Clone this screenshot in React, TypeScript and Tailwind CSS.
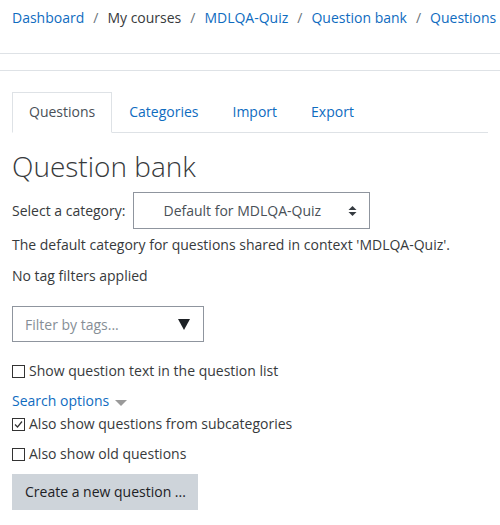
import React from 'react';

const font = { fontFamily: '"Segoe UI", "Open Sans", "Noto Sans", sans-serif' };

function Checkbox({ checked = false }: { checked?: boolean }) {
  return (
    <span className="inline-flex w-[13px] h-[13px] border border-[#333] bg-white items-center justify-center shrink-0">
      {checked && (
        <svg width="9" height="9" viewBox="0 0 9 9" fill="none">
          <path d="M1 4.5 L3.5 7 L8 1.5" stroke="#333" strokeWidth="1.2" />
        </svg>
      )}
    </span>
  );
}

export default function App() {
  const crumbs = ['Dashboard', 'My courses', 'MDLQA-Quiz', 'Question bank', 'Questions'];
  return (
    <div className="w-[500px] h-[525px] bg-white overflow-hidden text-[14px] text-[#373a3c]" style={font}>
      {/* Breadcrumb */}
      <nav className="flex items-start whitespace-nowrap pl-3 pt-[7px] h-[53px] leading-[22px]">
        {crumbs.map((c, i) => (
          <React.Fragment key={c}>
            {i > 0 && <span className="px-[9px] text-[#6a737b]">/</span>}
            <span className={i === 1 ? 'text-[#373a3c]' : 'text-[#0f6cbf]'}>{c}</span>
          </React.Fragment>
        ))}
      </nav>
      <div className="border-t border-[#dee2e6] h-[17px]" />
      <div className="border-t border-[#dee2e6]" />

      <div className="px-3">
        {/* Tabs */}
        <div className="mt-[21px] flex border-b border-[#dee2e6] leading-[22px]">
          <div className="px-4 py-2 border border-[#dee2e6] border-b-white -mb-px bg-white text-[#495057]">Questions</div>
          <div className="px-4 py-2 border border-transparent text-[#0f6cbf]">Categories</div>
          <div className="px-4 py-2 border border-transparent text-[#0f6cbf]">Import</div>
          <div className="px-4 py-2 border border-transparent text-[#0f6cbf]">Export</div>
        </div>

        {/* Heading */}
        <h2 className="mt-[15px] text-[28px] font-light leading-[36px] text-[#373a3c]">Question bank</h2>

        {/* Category select */}
        <div className="mt-[8px] flex items-center">
          <span className="leading-[22px]">Select a category:</span>
          <div className="ml-[8px] w-[237px] h-[37px] border border-[#8f959e] flex items-center pl-[29px] pr-3 text-[#495057]">
            <span className="flex-1">Default for MDLQA-Quiz</span>
            <svg width="9" height="12" viewBox="0 0 9 12">
              <path d="M0.5 5 L4.5 1 L8.5 5 Z" fill="#343a40" />
              <path d="M0.5 7 L4.5 11 L8.5 7 Z" fill="#343a40" />
            </svg>
          </div>
        </div>

        <p className="mt-[5px] leading-[22px]">The default category for questions shared in context 'MDLQA-Quiz'.</p>
        <p className="mt-[9px] leading-[22px]">No tag filters applied</p>

        {/* Tag filter */}
        <div className="mt-[19px] w-[192px] h-[36px] border border-[#8f959e] flex items-center pl-3 pr-[13px]">
          <span className="flex-1 text-[#868e96]">Filter by tags...</span>
          <svg width="12" height="11" viewBox="0 0 12 11">
            <path d="M0 0 L12 0 L6 11 Z" fill="#1d2125" />
          </svg>
        </div>

        <label className="mt-[18px] flex items-center gap-1 leading-[22px]">
          <Checkbox />
          <span>Show question text in the question list</span>
        </label>

        <div className="mt-[8px] flex items-center leading-[22px]">
          <span className="text-[#0f6cbf]">Search options</span>
          <svg className="ml-[6px] mt-[3px]" width="12" height="6" viewBox="0 0 12 6">
            <path d="M0 0 L12 0 L6 6 Z" fill="#9a9a9a" />
          </svg>
        </div>

        <label className="mt-px flex items-center gap-1 leading-[22px]">
          <Checkbox checked />
          <span>Also show questions from subcategories</span>
        </label>

        <label className="mt-[8px] flex items-center gap-1 leading-[22px]">
          <Checkbox />
          <span>Also show old questions</span>
        </label>

        <button className="mt-[9px] w-[186px] h-[36px] bg-[#ced4da] text-[#1d2125] text-left pl-[13px] leading-[22px]">
          Create a new question ...
        </button>
      </div>
    </div>
  );
}
